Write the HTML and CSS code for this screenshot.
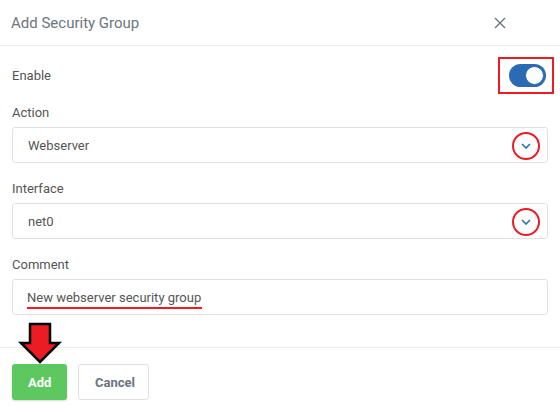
FILE: index.html
```html
<!DOCTYPE html>
<html lang="en">
<head>
  <meta charset="UTF-8" />
  <meta name="viewport" content="width=device-width, initial-scale=1.0"/>
  <title>Add Security Group</title>
  <link rel="stylesheet" href="styles.css">
</head>
<body>
  <div class="modal">
    <div class="modal-header">
      <h2>Add Security Group</h2>
      <span class="close">
        <svg width="12" height="12" viewBox="0 0 12 12"><path d="M1 1L11 11M11 1L1 11" stroke="#6c757d" stroke-width="1.4" fill="none"/></svg>
      </span>
    </div>

    <div class="modal-body">
      <div class="enable-row">
        <label>Enable</label>
        <span class="mark-box">
          <span class="toggle"><span class="knob"></span></span>
        </span>
      </div>

      <div class="field">
        <label>Action</label>
        <div class="select">
          <span>Webserver</span>
          <span class="chevron mark-circle">
            <svg width="10" height="6" viewBox="0 0 10 6"><path d="M1 1L5 5L9 1" stroke="#2a6bb3" stroke-width="1.6" fill="none"/></svg>
          </span>
        </div>
      </div>

      <div class="field">
        <label>Interface</label>
        <div class="select">
          <span>net0</span>
          <span class="chevron mark-circle">
            <svg width="10" height="6" viewBox="0 0 10 6"><path d="M1 1L5 5L9 1" stroke="#2a6bb3" stroke-width="1.6" fill="none"/></svg>
          </span>
        </div>
      </div>

      <div class="field">
        <label>Comment</label>
        <div class="input">
          <span class="underlined">New webserver security group</span>
        </div>
      </div>
    </div>

    <div class="modal-footer">
      <button class="btn btn-add">Add</button>
      <button class="btn btn-cancel">Cancel</button>
      <svg class="arrow" width="44" height="44" viewBox="0 0 44 44">
        <path d="M12 2H32V21H41L22 40L3 21H12Z" fill="#ed1c24" stroke="#000" stroke-width="2.5" stroke-linejoin="miter"/>
      </svg>
    </div>
  </div>
</body>
</html>
```

FILE: styles.css
```css
body { margin: 0; font-family: Roboto, "Liberation Sans", Arial, sans-serif; background: #fff; color: #555; }
.modal { width: 560px; height: 413px; position: relative; }

.modal-header { height: 45px; display: flex; align-items: center; justify-content: space-between; padding: 0 12px 0 11px; border-bottom: 1px solid #e9ecef; }
.modal-header h2 { margin: 0; font-size: 15px; font-weight: 400; color: #6c757d; }
.close { display: flex; margin-right: 42px; margin-top: 1px; }

.modal-body { padding: 11px 12px 0 12px; }
label { display: block; font-size: 13px; color: #555; line-height: 16px; }

.enable-row { display: flex; align-items: center; justify-content: space-between; height: 37px; }
.mark-box { width: 52px; height: 33px; border: 2px solid #ed1c24; display: flex; align-items: center; justify-content: center; margin-right: -6px; }
.toggle { width: 37px; height: 23px; border-radius: 12px; background: #2a6bb3; position: relative; display: block; margin-left: 2px; }
.knob { position: absolute; right: 2px; top: 2px; width: 19px; height: 19px; border-radius: 50%; background: #fff; border: 1px solid #2a6bb3; box-sizing: border-box; }

.field { margin-top: 11px; }
.field + .field { margin-top: 18px; }
.field label { margin-bottom: 6px; }

.select, .input { height: 34px; border: 1px solid #dee2e6; border-radius: 3px; display: flex; align-items: center; justify-content: space-between; padding: 0 7px 0 15px; font-size: 13px; color: #555; }
.input { padding-left: 14px; }
.chevron { display: flex; align-items: center; justify-content: center; }
.mark-circle { width: 24px; height: 24px; border: 2px solid #ed1c24; border-radius: 50%; margin-top: 1px; }
.underlined { border-bottom: 2px solid #ed1c24; padding: 0 1px 2px 0; margin-top: 4px; }

.modal-footer { position: absolute; left: 0; right: 0; top: 347px; border-top: 1px solid #e9ecef; padding: 16px 12px; display: flex; gap: 11px; }
.btn { height: 36px; font-family: inherit; font-size: 13px; font-weight: 700; border-radius: 3px; padding: 0 16px; cursor: pointer; }
.btn-add { width: 55px; background: #5cc85f; border: none; color: #fff; box-shadow: 0 1px 2px rgba(0,0,0,0.15); }
.btn-cancel { width: 71px; background: #fff; border: 1px solid #dee2e6; color: #6c757d; }
.arrow { position: absolute; left: 18px; top: -26px; }
```
